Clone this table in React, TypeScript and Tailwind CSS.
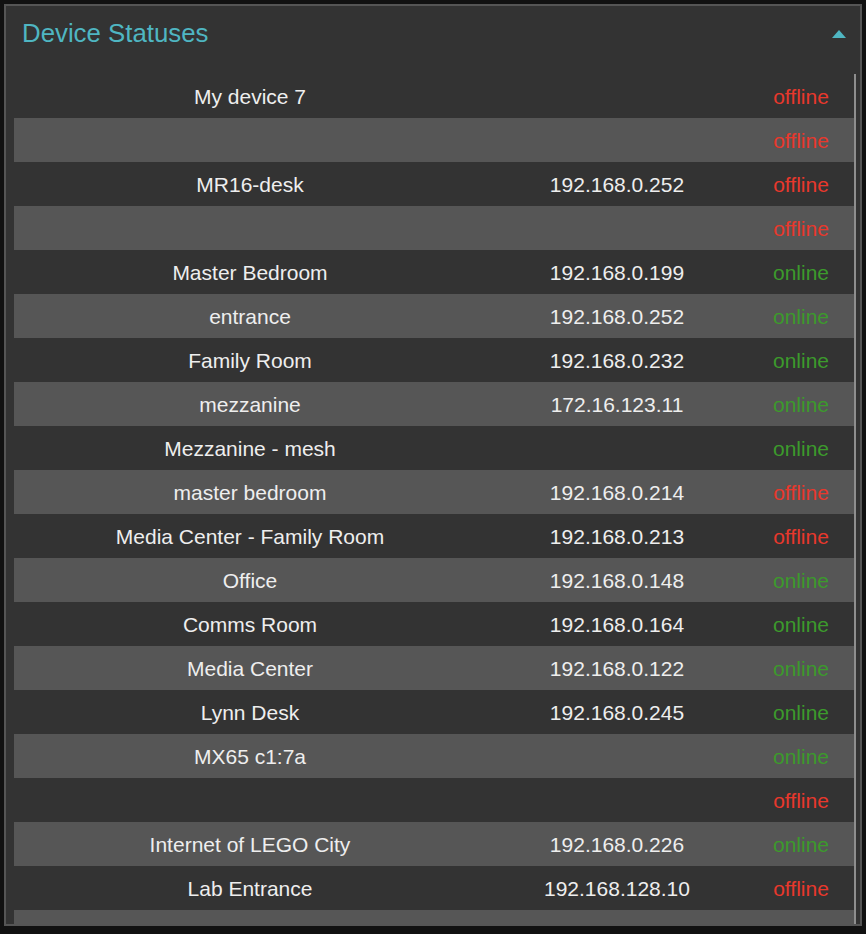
import React from "react";

type Device = {
  name: string;
  ip: string;
  online: boolean;
};

const devices: Device[] = [
  { name: "My device 7", ip: "", online: false },
  { name: "", ip: "", online: false },
  { name: "MR16-desk", ip: "192.168.0.252", online: false },
  { name: "", ip: "", online: false },
  { name: "Master Bedroom", ip: "192.168.0.199", online: true },
  { name: "entrance", ip: "192.168.0.252", online: true },
  { name: "Family Room", ip: "192.168.0.232", online: true },
  { name: "mezzanine", ip: "172.16.123.11", online: true },
  { name: "Mezzanine - mesh", ip: "", online: true },
  { name: "master bedroom", ip: "192.168.0.214", online: false },
  { name: "Media Center - Family Room", ip: "192.168.0.213", online: false },
  { name: "Office", ip: "192.168.0.148", online: true },
  { name: "Comms Room", ip: "192.168.0.164", online: true },
  { name: "Media Center", ip: "192.168.0.122", online: true },
  { name: "Lynn Desk", ip: "192.168.0.245", online: true },
  { name: "MX65 c1:7a", ip: "", online: true },
  { name: "", ip: "", online: false },
  { name: "Internet of LEGO City", ip: "192.168.0.226", online: true },
  { name: "Lab Entrance", ip: "192.168.128.10", online: false },
  { name: "Lab City Sensor Hub", ip: "192.168.0.20", online: true },
];

function DeviceRow({ device, index }: { device: Device; index: number }) {
  return (
    <div
      className={`grid grid-cols-[472px_262px_106px] h-[44px] pt-[2px] shrink-0 items-center text-center text-[21px] ${
        index % 2 === 0 ? "bg-[#333333]" : "bg-[#565656]"
      }`}
    >
      <span className="text-[#eeeeee] whitespace-nowrap">{device.name}</span>
      <span className="text-[#eeeeee] whitespace-nowrap">{device.ip}</span>
      <span className={device.online ? "text-[#3c9a2c]" : "text-[#e8382c]"}>
        {device.online ? "online" : "offline"}
      </span>
    </div>
  );
}

export default function App() {
  return (
    <div
      className="w-[866px] h-[934px] bg-[#111111] pt-[4px] pl-[4px] pr-[4px] pb-[8px] overflow-hidden"
      style={{ fontFamily: '"Liberation Sans", Arial, sans-serif' }}
    >
      <div className="h-full border-2 border-[#555555] bg-[#333333] flex flex-col overflow-hidden">
        {/* header */}
        <div className="h-[54px] pt-[2px] shrink-0 flex items-center justify-between pl-[16px] pr-[14px]">
          <h2 className="text-[25.8px] text-[#4fb6c2] leading-none">Device Statuses</h2>
          <svg width="14" height="8" viewBox="0 0 14 8" className="mb-[1px]">
            <polygon points="7,0 14,8 0,8" fill="#4fb6c2" />
          </svg>
        </div>

        <div className="flex flex-1 mt-[14px] pl-[8px] pr-[4px] overflow-hidden">
          <div className="w-[840px] flex flex-col overflow-hidden">
            {devices.map((d, i) => (
              <DeviceRow key={i} device={d} index={i} />
            ))}
          </div>
          <div className="w-[2px] bg-[#8e8e8e]" />
        </div>
      </div>
    </div>
  );
}
